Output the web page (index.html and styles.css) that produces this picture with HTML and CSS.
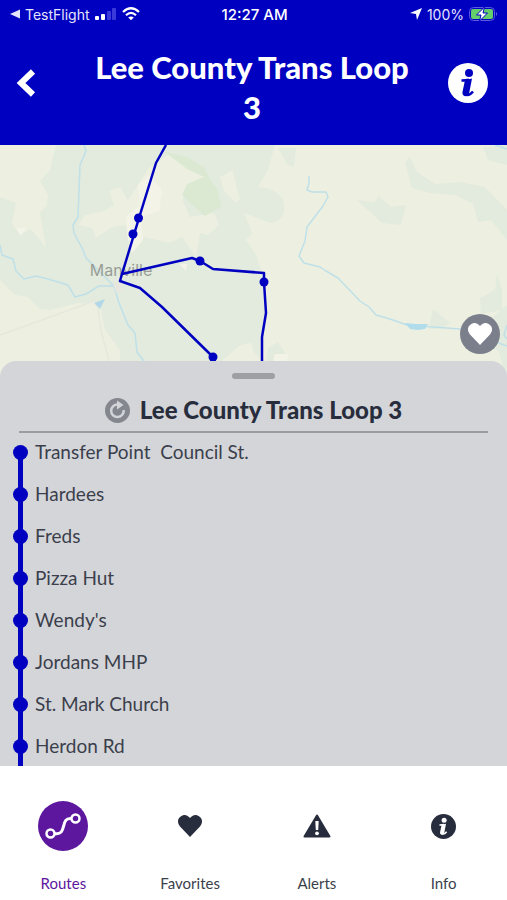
FILE: index.html
```html
<!DOCTYPE html>
<html lang="en">
<head>
    <meta charset="UTF-8">
    <meta name="viewport" content="width=device-width, initial-scale=1.0">
    <title>Lee County Trans Loop 3</title>
    <link rel="stylesheet" href="styles.css">
</head>
<body>

<header class="header">
    <div class="status-bar">
        <div class="status-left">
            <svg width="10" height="10" viewBox="0 0 10 10"><path d="M0 5 L10 0.500 V9.500 Z" fill="#e4e4fc"/></svg>
            <span class="status-app">TestFlight</span>
            <svg width="22" height="14" viewBox="0 0 22 14">
                <rect x="0" y="9" width="4" height="4" rx="1" fill="#fff"/>
                <rect x="6" y="7" width="4" height="6" rx="1" fill="#fff"/>
                <rect x="12" y="4" width="4" height="9" rx="1" fill="#3a3adb"/>
                <rect x="17" y="1" width="4" height="12" rx="1" fill="#3a3adb"/>
            </svg>
            <svg width="18" height="14" viewBox="0 0 18 14" fill="none" stroke="#fff" stroke-width="2.200">
                <path d="M1 5 Q9 -2.500 17 5"/>
                <path d="M4 8.200 Q9 3.600 14 8.200"/>
                <path d="M9 13.300 L6.200 10.500 Q9 8.300 11.800 10.500 Z" fill="#fff" stroke="none"/>
            </svg>
        </div>
        <span class="status-time">12:27 AM</span>
        <div class="status-right">
            <svg width="12" height="12" viewBox="0 0 12 12"><path d="M12 0 L7 12 L6 6 L0 5 Z" fill="#fff"/></svg>
            <span>100%</span>
            <svg width="30" height="14" viewBox="0 0 30 14">
                <rect x="0.500" y="0.500" width="25" height="13" rx="4" fill="none" stroke="#5a5ae0"/>
                <rect x="2" y="2" width="22" height="10" rx="2" fill="#65cf6c"/>
                <path d="M27 5 Q29.500 7 27 9 Z" fill="#5a5ae0"/>
                <path d="M15.500 0 L7.500 8 H12 L10.500 14 L18.500 6 H14 Z" fill="#fff" stroke="#0000c0" stroke-width="1"/>
            </svg>
        </div>
    </div>
    <div class="title-bar">
        <button class="icon-button" aria-label="Back">
            <svg width="20" height="28" viewBox="0 0 20 28" fill="none" stroke="#fff" stroke-width="6"><path d="M17 2.500 L5 14 L17 25.500"/></svg>
        </button>
        <h1>Lee County Trans Loop 3</h1>
        <button class="icon-button" aria-label="Route info">
            <svg width="40" height="40" viewBox="0 0 40 40">
                <circle cx="20" cy="20" r="20" fill="#fff"/>
                <circle cx="21" cy="10" r="4" fill="#0000c0"/>
                <path d="M13.500 17.500 Q18 17.500 21 16.700 M17 31.500 Q21 33.500 25 28.500" fill="none" stroke="#0000c0" stroke-width="2.500"/>
                <path d="M17 17 L24 15.500 L21 31 Q18 34.500 15.500 32.500 Q14 31.500 14.500 29 Z" fill="#0000c0"/>
            </svg>
        </button>
    </div>
</header>

<main class="content">
    <div class="map">
        <svg class="map-canvas" viewBox="0 0 507 232" preserveAspectRatio="xMidYMin slice" role="img" aria-label="Route map">
            <rect width="507" height="232" fill="#edf0e1"/>

            <!-- woodland -->
            <g fill="#e2ebdd">
                <path d="M56 0 H275 L268 25 L258 42 Q278 44 283 55 Q288 75 270 78 L244 68 L252 88 L246 95 L256 110 L262 128 L265 168 L262 192 L262 216 L248 200 L240 202 L222 232 L118 232 L116 200 L105 185 L100 160 L78 158 L50 165 L40 164 L28 152 L15 150 L0 135 V52 L16 58 L12 78 L20 90 L30 84 L38 92 L46 103 L40 68 L47 60 L48 50 L40 36 L50 25 Z"/>
                <path d="M357 55 L375 57 L378 51 L391 62 L406 60 L401 80 L382 78 Z"/>
                <path d="M405 17 L410 12 L417 27 L435 39 L460 37 L485 42 L507 65 L507 95 L491 75 L478 77 L473 59 L455 50 L429 48 L412 43 Z"/>
                <path d="M483 2 L507 0 V20 L488 15 Z"/>
                <path d="M480 153 L495 145 L497 128 L502 145 V165 L481 169 Z"/>
                <path d="M430 176 L433 164 L450 178 L442 184 L430 184 Z"/>
                <path d="M495 170 L507 160 V232 L498 205 L478 203 L482 190 Z"/>
                <path d="M268 203 L278 197 L288 212 L275 220 L266 216 Z"/>
                <path d="M278 3 L296 3 L294 22 L287 19 Z"/>
            </g>

            <!-- fields and clearings -->
            <g fill="#edf0e1">
                <path d="M85 70 L104 66 L114 60 L109 46 L120 42 L128 55 L148 24 L170 8 L185 20 L206 32 L184 46 L183 56 L190 72 L214 68 L219 80 L208 90 L200 88 L196 112 L182 92 L170 98 L145 92 L132 108 L126 80 L112 82 L96 93 L92 83 L78 80 Z"/>
                <path d="M220 32 L233 25 L236 40 L240 54 L236 58 L224 46 Z"/>
                <path d="M0 187 L28 178 L95 155 L105 185 L120 205 L120 232 H0 Z"/>
                <path d="M412 17 L420 18 Q448 20 449 35 L435 35 L421 27 Z"/>
                <path d="M222 216 L240 200 L252 198 L254 210 L248 220 Z"/>
            </g>
            <path d="M0 190 L28 180 L97 155 L101 185 L109 216" fill="none" stroke="#e5e8dc" stroke-width="1.500"/>
            <path d="M165 7 L187 12 L205 23 L210 35 L218 45 L221 62 L205 71 L182 50 L187 39 L204 32 L187 24 Z" fill="#dce9d2"/>
            <g fill="#f3f3e8">
                <path d="M138 39 L150 31 L162 45 L159 66 L141 72 Z"/>
                <path d="M126 72 L139 61 L143 95 L132 108 L127 90 Z"/>
                <path d="M16 83 L26 83 L21 91 Z"/>
                <path d="M179 119 L187 119 L186 126 Z"/>
                <path d="M275 209 L289 209 L286 216 H273 Z"/>
            </g>

            <!-- rivers and ponds -->
            <g fill="none" stroke="#bfe0e8" stroke-width="1.500" stroke-linejoin="round">
                <path d="M84 0 L86 6 L80 20 L78 72 L73 80 L74 88 L83 105 L86 113 L97 124 L113 140"/>
                <path d="M0 100 L2 110 L13 114 L16 126 L24 134 L36 131 L48 134 L68 140 L75 152 L86 149 L99 141 L114 141 L119 158 L128 180 L135 188 L137 207 L150 224"/>
                <path d="M309 31 L309 38 L307 45 L312 47 L326 47 L328 52 L323 61 L307 82 L305 96 L299 111 L304 118 L320 122 L326 126 L338 133 L360 156 L369 162 L376 170 L390 174 L407 180 L460 184 L507 201"/>
                <path d="M495 0 L507 4 M507 180 L504 190 L507 194"/>
            </g>
            <path d="M405 178 L416 179 L428 179 L425 184 L418 185 L410 184 Z" fill="#b1dcec"/>
            <path d="M94 158 L105 154 L100 164 Z" fill="#b1d7e8"/>
            <path d="M113 138 L121 137 L124 144 L116 148 Z" fill="#e7e6df"/>

            <text class="map-label" x="121" y="131" text-anchor="middle">Manville</text>

            <!-- route line with stops -->
            <g fill="none" stroke="#0000c0" stroke-width="2.500" stroke-linejoin="round">
                <path d="M166 0 L156 18 L139 73 L122 129 L120 136 L140 143 L162 162 L213 212"/>
                <path d="M122 129 L192 113 L200 116 L213 124 L264 128 L264 137 L266 168 L262 192 L262 220"/>
            </g>
            <g fill="#0000c0">
                <circle cx="138.500" cy="73" r="4.500"/>
                <circle cx="133" cy="89" r="4.500"/>
                <circle cx="200" cy="116" r="4.500"/>
                <circle cx="264" cy="137" r="4.500"/>
                <circle cx="213" cy="212" r="4.500"/>
            </g>
        </svg>
        <button class="favorite-button" aria-label="Add to favorites">
            <svg width="24" height="22" viewBox="0 0 24 22"><path d="M12 22 L2 11.500 Q-1.500 7 1 3 Q5.500 -2.500 11 2 L12 3 L13 2 Q18.500 -2.500 23 3 Q25.500 7 22 11.500 Z" fill="#fff"/></svg>
        </button>
    </div>

    <section class="panel">
        <div class="handle"></div>
        <div class="panel-title">
            <button class="icon-button" aria-label="Refresh">
                <svg width="25" height="25" viewBox="0 0 25 25">
                    <circle cx="12.500" cy="12.500" r="12.500" fill="#84878e"/>
                    <path d="M13 6.500 A6.300 6.300 0 1 0 18.700 12" fill="none" stroke="#d4d5d9" stroke-width="2.500"/>
                    <path d="M12 2.500 L18.500 7 L12 11.500 Z" fill="#d4d5d9"/>
                </svg>
            </button>
            <h2>Lee County Trans Loop 3</h2>
        </div>
        <ul class="stops">
            <li>Transfer Point&nbsp; Council St.</li>
            <li>Hardees</li>
            <li>Freds</li>
            <li>Pizza Hut</li>
            <li>Wendy's</li>
            <li>Jordans MHP</li>
            <li>St. Mark Church</li>
            <li>Herdon Rd</li>
        </ul>
    </section>
</main>

<nav class="tab-bar">
    <a href="#routes" class="tab active">
        <span class="tab-icon">
            <svg width="36" height="26" viewBox="0 0 36 26" fill="none" stroke="#fff" stroke-width="2.500">
                <circle cx="5.500" cy="20.500" r="4"/>
                <circle cx="30.500" cy="5.500" r="4"/>
                <path d="M9.500 20.500 C23 23 14.500 4 26.500 5.500" stroke-width="3"/>
            </svg>
        </span>
        Routes
    </a>
    <a href="#favorites" class="tab">
        <span class="tab-icon">
            <svg width="26" height="22" viewBox="0 0 24 22"><path d="M12 22 L2 11.500 Q-1.500 7 1 3 Q5.500 -2.500 11 2 L12 3 L13 2 Q18.500 -2.500 23 3 Q25.500 7 22 11.500 Z" fill="#282d3d"/></svg>
        </span>
        Favorites
    </a>
    <a href="#alerts" class="tab">
        <span class="tab-icon">
            <svg width="28" height="24" viewBox="0 0 28 24">
                <path d="M14 1.500 L26.500 22.500 H1.500 Z" fill="#282d3d" stroke="#282d3d" stroke-width="2" stroke-linejoin="round"/>
                <path d="M12.300 7 H15.700 L15.200 16 H12.800 Z" fill="#fff"/>
                <circle cx="14" cy="19.300" r="1.900" fill="#fff"/>
            </svg>
        </span>
        Alerts
    </a>
    <a href="#info" class="tab">
        <span class="tab-icon">
            <svg width="25" height="25" viewBox="0 0 40 40">
                <circle cx="20" cy="20" r="20" fill="#282d3d"/>
                <circle cx="21" cy="10" r="4" fill="#fff"/>
                <path d="M13.500 17.500 Q18 17.500 21 16.700 M17 31.500 Q21 33.500 25 28.500" fill="none" stroke="#fff" stroke-width="2.500"/>
                <path d="M17 17 L24 15.500 L21 31 Q18 34.500 15.500 32.500 Q14 31.500 14.500 29 Z" fill="#fff"/>
            </svg>
        </span>
        Info
    </a>
</nav>

</body>
</html>
```

FILE: styles.css
```css
* {
    margin: 0;
    padding: 0;
    box-sizing: border-box;
}

body {
    display: flex;
    flex-direction: column;
    height: 100vh;
    background-color: white;
    color: #282d3d;
    font-family: Lato, sans-serif;
}

svg {
    display: block;
}

button {
    border: none;
    background: none;
    cursor: pointer;
}

.header {
    background-color: #0000c0;
    color: white;
    padding-bottom: 18px;
}

.status-bar {
    display: grid;
    grid-template-columns: 1fr auto 1fr;
    align-items: center;
    height: 28px;
    padding: 0 8px 0 10px;
    font-family: Inter, sans-serif;
    font-size: 14px;
}

.status-left,
.status-right {
    display: flex;
    align-items: center;
    gap: 5px;
    color: #e4e4fc;
}

.status-right {
    justify-content: flex-end;
}

.status-time {
    font-size: 15px;
    font-weight: 500;
}

.title-bar {
    display: flex;
    align-items: flex-start;
    justify-content: space-between;
    padding: 19px 19px 0 16px;
}

.title-bar h1 {
    width: 70%;
    font-size: 31px;
    font-weight: 900;
    line-height: 40px;
    text-align: center;
}

.title-bar .icon-button {
    display: flex;
    align-items: center;
    width: 40px;
    height: 72px;
}

.content {
    flex: 1;
    min-height: 0;
    display: flex;
    flex-direction: column;
}

.map {
    position: relative;
    flex: 0 0 232px;
}

.map-canvas {
    width: 100%;
    height: 100%;
}

.map-label {
    font-family: Inter, sans-serif;
    font-size: 16px;
    fill: #999d98;
}

.favorite-button {
    position: absolute;
    right: 7px;
    bottom: 23px;
    display: flex;
    align-items: center;
    justify-content: center;
    width: 40px;
    height: 40px;
    border-radius: 50%;
    background-color: #7b7f8c;
}

.panel {
    position: relative;
    flex: 1;
    min-height: 0;
    display: flex;
    flex-direction: column;
    margin-top: -16px;
    border-radius: 16px 16px 0 0;
    background-color: #d4d5d9;
}

.handle {
    flex: none;
    width: 43px;
    height: 6px;
    margin: 12px auto 0;
    border-radius: 3px;
    background-color: #9d9fa3;
}

.panel-title {
    display: flex;
    align-items: center;
    justify-content: center;
    gap: 10px;
    margin: 0 19px;
    padding: 15px 0 5px;
    border-bottom: 2px solid #999ca1;
}

.panel-title h2 {
    font-size: 24px;
    font-weight: 900;
    line-height: 32px;
}

.stops {
    flex: 1;
    min-height: 0;
    padding-top: 1px;
    overflow-y: auto;
    scrollbar-width: none;
    list-style: none;
}

.stops li {
    position: relative;
    height: 42px;
    padding-left: 35px;
    font-size: 19px;
    line-height: 36px;
    color: #3b3f4c;
}

/* line between the stops */
.stops li::before {
    content: "";
    position: absolute;
    top: 0;
    left: 18px;
    width: 5px;
    height: 100%;
    background-color: #0000c0;
}

.stops li:first-child::before {
    top: 18px;
}

.stops li::after {
    content: "";
    position: absolute;
    top: 11px;
    left: 13px;
    width: 15px;
    height: 15px;
    border-radius: 50%;
    background-color: #0000c0;
}

.tab-bar {
    display: flex;
    height: 134px;
    padding-top: 35px;
}

.tab {
    flex: 1;
    display: flex;
    flex-direction: column;
    align-items: center;
    gap: 22px;
    color: #3b3f4c;
    font-size: 15px;
    line-height: 20px;
    text-decoration: none;
}

.tab-icon {
    display: flex;
    align-items: center;
    justify-content: center;
    width: 50px;
    height: 50px;
    border-radius: 50%;
}

.tab.active {
    color: #5d169e;
}

.tab.active .tab-icon {
    background-color: #5d169e;
}
```
